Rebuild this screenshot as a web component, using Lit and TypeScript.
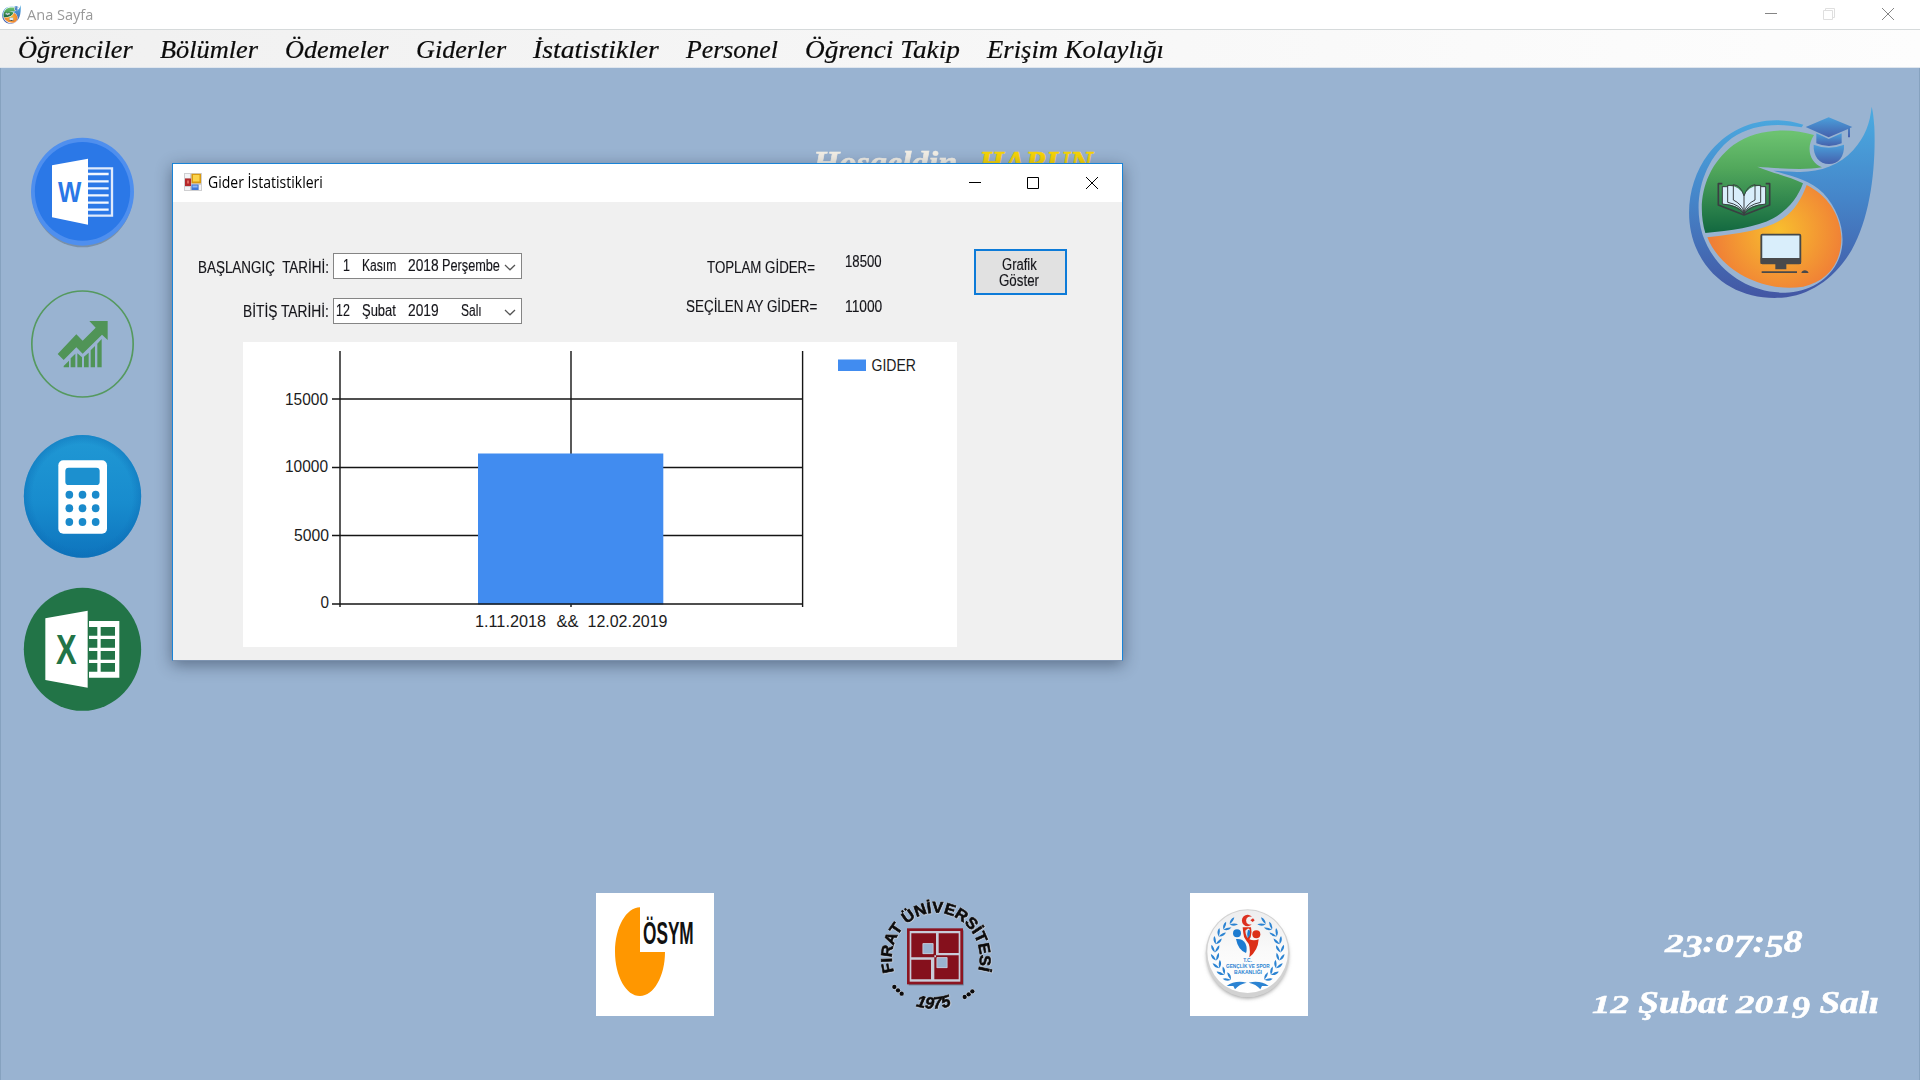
import { LitElement, html, svg, css } from "lit";
import { customElement, property } from "lit/decorators.js";

/** One line of text, stretched or squeezed horizontally to a given width. */
@customElement("fit-text")
class FitText extends LitElement {
  static styles = css`
    :host { display: block; white-space: pre; flex: none; }
    .line { display: inline-block; transform-origin: 0 50%; }
  `;
  @property({ type: Number }) w = 0;
  updated() {
    const line = this.renderRoot.querySelector(".line") as HTMLElement;
    const natural = line.offsetWidth;
    this.style.width = `${this.w}px`;
    if (natural && this.w) line.style.transform = `scaleX(${this.w / natural})`;
  }
  render() {
    return html`<span class="line"><slot></slot></span>`;
  }
}

/** Emblem: comet shape with cap, book and monitor. */
const emblem = (cls: string, id: string) => html`
  <svg class=${cls} viewBox="81 318 570 582" preserveAspectRatio="none">
    <defs>
      <linearGradient id="${id}b" gradientUnits="userSpaceOnUse" x1="0" y1="350" x2="0" y2="895">
        <stop offset="0" stop-color="#4aa8df" /><stop offset=".45" stop-color="#4585c9" /><stop offset="1" stop-color="#4356a3" />
      </linearGradient>
      <linearGradient id="${id}g" gradientUnits="userSpaceOnUse" x1="0" y1="400" x2="0" y2="695">
        <stop offset="0" stop-color="#6cc270" /><stop offset=".35" stop-color="#52a85c" /><stop offset="1" stop-color="#136940" />
      </linearGradient>
      <radialGradient id="${id}o" gradientUnits="userSpaceOnUse" cx="355" cy="695" r="200">
        <stop offset="0" stop-color="#f8bf2e" /><stop offset="1" stop-color="#f07f36" />
      </radialGradient>
      <linearGradient id="${id}c" x1="0" y1="0" x2="0" y2="1">
        <stop offset="0" stop-color="#4a9fdb" /><stop offset="1" stop-color="#4560ac" />
      </linearGradient>
    </defs>
    <path fill="url(#${id}b)" d="M430 374C330 340 215 370 145 462C85 540 68 660 112 752C160 855 260 900 365 893C450 887 525 835 575 750C632 650 648 500 643 380C641 350 638 330 635 320C630 370 615 410 580 450C535 500 470 520 400 515L340 512C400 530 450 540 490 580C545 640 562 720 535 780C510 840 440 880 370 878C260 876 165 810 128 705C95 600 130 480 215 415C275 372 355 368 425 382Z" />
    <path fill="url(#${id}g)" d="M462 405C390 382 290 385 220 435C130 505 110 610 136 699C210 693 290 682 340 655C385 630 415 590 429 550C390 530 340 520 292 500C350 504 430 512 486 502C452 490 435 445 462 405Z" />
    <path fill="url(#${id}o)" d="M142 712C240 700 320 690 370 655C405 630 425 595 440 555C500 585 540 640 544 710C546 790 500 845 430 860C310 880 180 810 142 712Z" />
    <path fill="url(#${id}c)" d="M437 381L506 352L577 381L570 384V412H564V387L506 412Z" />
    <path fill="url(#${id}c)" d="M469 400L506 417L545 400V430Q507 446 469 430Z" />
    <path fill="url(#${id}c)" d="M461 434Q506 452 552 434C554 470 535 492 507 492C478 492 459 468 461 434Z" />
    <g stroke="#3a3f42" stroke-width="3" fill="#d9eefb" stroke-linejoin="round">
      <path fill="none" stroke-width="5" d="M187 551H175V615L252 645L329 615V551H317" />
      <path d="M252 640C240 620 215 612 187 612V562Q235 548 252 588Q270 548 317 562V612C290 612 264 620 252 640Z" stroke="none" />
      <path fill="none" d="M252 636V588Q243 556 220 554V600Q245 612 252 636Q260 612 285 600V554Q262 556 252 588M220 556H203V607Q240 614 252 640Q264 614 302 607V556H285M203 560H187V612Q235 616 252 642Q270 616 317 612V560H302" />
    </g>
    <rect x="304" y="704" width="117" height="86" rx="3" fill="#d9eefb" stroke="#44484a" stroke-width="5.500" />
    <path fill="#48494b" d="M302 774H423V792H379V808H346V792H302ZM305 814H411V819H305ZM424 819Q426 811 435 811Q444 812 446 819Z" />
  </svg>`;

const wordIcon = html`
  <svg class="ic-word" viewBox="90 48 315 336">
    <ellipse cx="247.500" cy="219" rx="152" ry="163" fill="#5f7287" opacity=".55" />
    <ellipse cx="247.500" cy="215" rx="154.500" ry="162" fill="#4f8fee" />
    <ellipse cx="247.500" cy="214" rx="143" ry="148" fill="#2b78e7" />
    <path fill="#fff" d="M156 136L264 116V314L156 292Z" />
    <path fill="none" stroke="#dfeafc" stroke-width="7" d="M264 145H336V287H264" />
    <path stroke="#f2f7ff" stroke-width="7" d="M264 162H326M264 184H326M264 205H326M264 226H326M264 248H326M264 269H326" />
    <text x="174" y="247" textLength="70" lengthAdjust="spacingAndGlyphs" class="ms" fill="#2b78e7" font-size="91">W</text>
  </svg>`;

const growthIcon = html`
  <svg class="ic-growth" viewBox="90 507 315 330">
    <ellipse cx="247.500" cy="672" rx="152" ry="159" fill="none" stroke="#55995f" stroke-width="5" />
    <path fill="#509457" d="M268 603H323V660L306 644L248 701L229 682L191 720L173 702L229 643L248 662L287 623Z" />
    <path fill="#509457" d="M191 742V738L207 722V742ZM212 742V715L226 701V742ZM232 742V700L246 712V742ZM252 742V710L266 698V742ZM272 742V691L285 678V742ZM292 742V671L305 657V742Z" />
  </svg>`;

const calcIcon = html`
  <svg class="ic-big" viewBox="69 42 357 375">
    <defs>
      <linearGradient id="cg" x1="0" y1="0" x2="0" y2="1">
        <stop offset="0" stop-color="#2098d4" /><stop offset=".55" stop-color="#188cce" /><stop offset="1" stop-color="#0e74bd" />
      </linearGradient>
      <radialGradient id="cr"><stop offset=".85" stop-color="#0d6db5" stop-opacity="0" /><stop offset="1" stop-color="#0d6db5" stop-opacity=".45" /></radialGradient>
    </defs>
    <ellipse cx="247.500" cy="229" rx="176" ry="184" fill="url(#cg)" />
    <ellipse cx="247.500" cy="229" rx="176" ry="184" fill="url(#cr)" />
    <rect x="175" y="121" width="146" height="220" rx="15" fill="#fff" />
    <rect x="196" y="143" width="103" height="52" rx="10" fill="#1c90cf" />
    ${[224, 265, 306].map((y) => [208, 247.5, 287].map((x) => svg`<ellipse cx=${x} cy=${y} rx="11.500" ry="12" fill="#1a8acb" />`))}
  </svg>`;

const excelIcon = html`
  <svg class="ic-big" viewBox="69 501 357 375">
    <ellipse cx="247.500" cy="688" rx="176" ry="184.500" fill="#227447" />
    <path fill="#fff" d="M136 595L263 572V803L136 780ZM267 603H358V773H267Z" />
    ${[621, 657, 693, 729].map((y) => svg`<path fill="#227447" d="M267 ${y}H292V${y + 26}H267ZM302 ${y}H345V${y + 26}H302Z" />`)}
    <text x="168" y="732" textLength="62" lengthAdjust="spacingAndGlyphs" class="ms" fill="#227447" font-size="125">X</text>
  </svg>`;

const osymLogo = html`
  <svg class="osym" viewBox="33 39 354 369">
    <rect x="33" y="39" width="354" height="369" fill="#fff" />
    <path fill="#ff9700" d="M165 82C124 82 90 142 90 215C90 289 124 348 165 348C206 348 240 289 240 216H165Z" />
    <text transform="translate(174 193) scale(.55 1)" class="ms" fill="#111" font-size="94">ÖSYM</text>
  </svg>`;

const firatLogo = html`
  <svg class="firat" viewBox="876 48 351 354">
    <defs>
      <path id="arc" d="M927 276A132 136 0 1 1 1178 277" />
      <path id="arcLow" d="M985 376Q1048 398 1110 372" />
    </defs>
    <g class="ms halo" fill="#0b0b0d" stroke="#0b0b0d" stroke-width="2">
      <text font-size="47"><textPath href="#arc" textLength="500" lengthAdjust="spacingAndGlyphs">FIRAT ÜNİVERSİTESİ</textPath></text>
      <text font-size="49" font-style="italic"><textPath href="#arcLow" startOffset="8">1975</textPath></text>
    </g>
    <g fill="#0b0b0d" stroke="#d9dce2" stroke-width="3" paint-order="stroke">
      <circle cx="928" cy="321" r="6.500" /><circle cx="939" cy="331" r="6.500" /><circle cx="950" cy="341" r="6.500" />
      <circle cx="1139" cy="351" r="6.500" /><circle cx="1151" cy="343" r="6.500" /><circle cx="1162" cy="334" r="6.500" />
    </g>
    <rect x="971" y="151" width="165" height="165" fill="#55606f" opacity=".7" />
    <rect x="966" y="145" width="168" height="168" fill="#8c1420" />
    <rect x="974" y="153" width="152" height="152" fill="#c9ccd9" />
    <path fill="#85101c" fill-rule="evenodd" d="M979 160H1053V232H979ZM1013 190V222H1045V190ZM1048 226H1121V298H1048ZM1055 232V264H1087V232Z" />
    <path fill="#85101c" d="M1061 160H1121V219H1061ZM979 239H1038V298H979Z" />
    <path fill="#9ab3d0" stroke="#c9ccd9" stroke-width="2" d="M1014 191H1044V221H1014ZM1056 233H1086V263H1056Z" />
  </svg>`;

const leaves = [-1, 1].flatMap((side) =>
  Array.from({ length: 9 }, (_, i) => {
    const a = ((62 - i * 14.5) * Math.PI) / 180;
    const x = 203 + side * Math.cos(a) * 98;
    const y = 215 - Math.sin(a) * 98;
    const along = (Math.atan2(-Math.cos(a), -side * Math.sin(a)) * 180) / Math.PI;
    return svg`<g transform="translate(${x} ${y}) rotate(${along})">
      <path d="M-9 0Q-2 -14 13 -12Q7 -3 -9 0ZM-9 0Q-2 14 13 12Q7 3 -9 0Z" /></g>`;
  })
);

const gsbLogo = html`
  <svg class="gsb" viewBox="30 39 354 369">
    <defs>
      <filter id="soft" x="-20%" y="-20%" width="140%" height="140%"><feGaussianBlur stdDeviation="6" /></filter>
      <linearGradient id="ball" x1="0" y1="0" x2="0" y2="1"><stop offset="0" stop-color="#ededee" /><stop offset=".5" stop-color="#fafafa" /><stop offset="1" stop-color="#fff" /></linearGradient>
    </defs>
    <rect x="30" y="39" width="354" height="369" fill="#fff" />
    <ellipse cx="203" cy="228" rx="121" ry="126" fill="#8a8a8a" filter="url(#soft)" />
    <ellipse cx="203" cy="220" rx="126" ry="132" fill="#d2d2d2" />
    <ellipse cx="203" cy="215" rx="121" ry="124" fill="url(#ball)" />
    <g fill="#2b83d2">${leaves}
      <path d="M140 318Q165 300 200 308Q178 312 165 328L160 318ZM266 318Q241 300 206 308Q228 312 241 328L246 318Z" />
    </g>
    <path fill="#dc3020" fill-rule="evenodd" d="M216 111A17 17 0 1 0 216 132A12 12 0 1 1 216 111ZM219 115L224 121L218 126L211 121Z" />
    <circle cx="171" cy="160" r="12" fill="#1d7bd0" /><circle cx="229" cy="163" r="12" fill="#dc3018" />
    <path fill="#1d7bd0" d="M168 177Q188 175 196 190Q203 205 198 219Q174 210 168 177Z" />
    <path fill="#dc3018" d="M188 142H213Q217 158 212 172L208 178Q222 184 236 178Q234 212 208 232Q214 196 199 182Q190 172 190 160Z" />
    <path fill="#d7ecfa" d="M196 152Q206 142 208 148Q212 165 202 174Q196 162 196 152Z" /><path fill="#1d7bd0" d="M204 150Q213 148 209 166L203 175Q200 160 204 150Z" />
    <g class="ms" fill="#2b83d2">
      <text x="190" y="247" font-size="17" textLength="26" lengthAdjust="spacingAndGlyphs">T.C.</text>
      <text x="138" y="265" font-size="18" textLength="131" lengthAdjust="spacingAndGlyphs">GENÇLİK VE SPOR</text>
      <text x="162" y="283" font-size="18" textLength="84" lengthAdjust="spacingAndGlyphs">BAKANLIĞI</text>
    </g>
  </svg>`;

const formIcon = html`
  <svg class="form-icon" viewBox="0 0 18 18">
    <rect width="18" height="18" fill="#cfcfd1" />
    <path fill="#f3f3f5" d="M1 1H6V5H1ZM1 14H6V17H1ZM15 12H17V17H15Z" />
    <rect x="1" y="5.500" width="6" height="7.500" fill="#b5282a" /><rect x="3" y="7.500" width="2" height="3" fill="#e06a60" />
    <rect x="7.500" y=".8" width="9.500" height="9.500" fill="#d99a10" /><rect x="9" y="2" width="6.500" height="6.500" fill="#fbd34b" />
    <rect x="7.500" y="11.500" width="7" height="5.500" fill="#3f78d8" /><rect x="8.500" y="12.500" width="5" height="2" fill="#8db6f5" />
  </svg>`;

/** Window buttons: minimise, maximise or restore, close. */
const controls = (restore: boolean) => html`
  <svg class="controls" viewBox="0 0 130 14" fill="none" stroke="currentColor">
    <path d="M1 6.500H13" />
    ${restore
      ? svg`<path class="faint" d="M59.500 3.500H68.500V12.500H59.500ZM61.500 3.500V1.500H70.500V10.500H68.500" />`
      : svg`<path d="M59.500 1.500H70.500V12.500H59.500Z" />`}
    <path d="M118 1L130 13M130 1L118 13" />
  </svg>`;

const menu: [string, number][] = [
  ["Öğrenciler", 115], ["Bölümler", 98], ["Ödemeler", 104], ["Giderler", 90],
  ["İstatistikler", 126], ["Personel", 92], ["Öğrenci Takip", 155], ["Erişim Kolaylığı", 177],
];

/** Old-style figures: 0-2 at x-height, 3, 4, 5, 7 and 9 below the baseline. */
const oldStyle = (text: string) =>
  [...text].map((c) =>
    /[012]/.test(c) ? html`<span class="low">${c}</span>` : /[34579]/.test(c) ? html`<span class="drop">${c}</span>` : c
  );

interface Cell { text: string; x: number; w: number; }
const pickers: Cell[][] = [
  [{ text: "1", x: 9, w: 7 }, { text: "Kasım", x: 12, w: 34 }, { text: "2018", x: 12, w: 31 }, { text: "Perşembe", x: 3, w: 58 }],
  [{ text: "12", x: 2, w: 14 }, { text: "Şubat", x: 12, w: 34 }, { text: "2019", x: 12, w: 31 }, { text: "Salı", x: 22, w: 21 }],
];

const yAxis = [
  { label: "15000", y: 57, x: 42, w: 43, base: 62.5 },
  { label: "10000", y: 125.5, x: 42, w: 43, base: 130 },
  { label: "5000", y: 193.5, x: 51, w: 35, base: 198.5 },
];

const chart = html`
  <svg class="chart" viewBox="0 0 714 305">
    <path stroke="#151515" stroke-width="1.400" d="M97 9V265M328 9V265M559.600 9V265" />
    ${yAxis.map((t) => svg`<path stroke="#151515" stroke-width="1.400" d="M89 ${t.y}H560" />
      <text x=${t.x} y=${t.base} textLength=${t.w} lengthAdjust="spacingAndGlyphs">${t.label}</text>`)}
    <rect x="235" y="111.500" width="185.300" height="151" fill="#418cf0" />
    <path stroke="#151515" stroke-width="1.400" d="M89 262H560" />
    <text x="77.500" y="266" textLength="8.500" lengthAdjust="spacingAndGlyphs">0</text>
    <text x="232" y="285" textLength="71" lengthAdjust="spacingAndGlyphs">1.11.2018</text>
    <text x="313.500" y="285" textLength="22" lengthAdjust="spacingAndGlyphs">&amp;&amp;</text>
    <text x="344.500" y="285" textLength="80" lengthAdjust="spacingAndGlyphs">12.02.2019</text>
    <rect x="595" y="17.500" width="28" height="11.500" fill="#418cf0" />
    <text class="key" x="628.500" y="28.700" textLength="44.500" lengthAdjust="spacingAndGlyphs">GIDER</text>
  </svg>`;

@customElement("app-root")
class AppRoot extends LitElement {
  static styles = css`
    :host { display: flex; flex-direction: column; position: relative; width: 1920px; height: 1080px; overflow: hidden;
      background: #99b3d1; font-family: "Liberation Sans", Arial, sans-serif; color: #111; }
    svg { display: block; flex: none; }
    .ms { font-family: "Liberation Sans", Arial, sans-serif; font-weight: bold; }
    .halo { filter: drop-shadow(0 0 1px #fff) drop-shadow(1px 1px 1px #e4e4ea); }

    .titlebar { display: flex; height: 29px; background: #fff; color: #999; box-sizing: border-box; padding: 5px 26px 0 2px; font: 15px/19px "Open Sans", sans-serif; }
    .mini { width: 19px; height: 19px; margin-right: 6px; }
    .controls { width: 130px; height: 14px; }
    .titlebar .controls { margin: 2px 0 0 auto; color: #858585; }
    .faint { stroke: #dfdfdf; }

    .menubar { display: flex; gap: 27px; height: 39px; box-sizing: border-box; padding: 4px 0 0 18px;
      border-top: 1px solid #d6dadb; border-bottom: 1px solid #dfe6ee; background: linear-gradient(90deg, #f0f0f0, #fdfdfd);
      font: italic 25px/31px "Liberation Serif", "Times New Roman", serif; color: #0b0b0b; -webkit-text-stroke: .2px #0b0b0b; }

    .desktop { flex: 1; display: flex; flex-direction: column; border: solid #86a2bf; border-width: 0 1px; box-sizing: border-box; }
    .top { display: flex; align-items: flex-start; height: 825px; }
    .icons { display: flex; flex-direction: column; align-items: center; width: 119px; padding: 68px 0 0 22px; }
    .ic-word { width: 105px; height: 112px; margin-bottom: 41px; }
    .ic-growth { width: 105px; height: 110px; margin-bottom: 35px; }
    .ic-big { width: 119px; height: 125px; margin-bottom: 28px; }
    .welcome { display: flex; gap: 22px; padding: 74px 0 0 671px; color: #f3efe6; -webkit-text-stroke: .6px; }
    .welcome, .clock { font: italic bold 32px/40px "Liberation Serif", "Times New Roman", serif; }
    .name { color: #f7d406; }
    .emblem { width: 190px; height: 194px; margin: 38px 42px 0 auto; }

    .bottom { display: flex; align-items: flex-start; padding-left: 595px; }
    .osym, .gsb { width: 118px; height: 123px; }
    .firat { width: 117px; height: 118px; margin: 3px 196px 0 163px; overflow: visible; }
    .clock { display: flex; flex-direction: column; gap: 21px; width: 287px; margin: 28px 40px 0 auto; color: #fff; -webkit-text-stroke: .6px #fff; }
    .time { margin-left: 73px; }
    .low, .drop { display: inline-block; }
    .low { transform: scaleY(.76); transform-origin: 50% 77%; }
    .drop { transform: translateY(.16em); }

    .window { position: absolute; left: 172px; top: 163px; width: 949px; height: 496px; border: 1px solid #1883d7; border-bottom-color: #7d93b0;
      background: #f0f0f0; box-shadow: 0 4px 15px 0 rgba(20, 30, 50, .45); }
    .caption { display: flex; height: 38px; background: #fff; color: #000; font: 15.500px/20px "Open Sans", sans-serif; }
    .form-icon { width: 18px; height: 18px; margin: 9px 6px 0 11px; }
    .caption fit-text { margin-top: 8px; }
    .caption .controls { margin: 12px 24px 0 auto; color: #000; }
    .fields { display: flex; align-items: flex-start; height: 140px; font-size: 16px; line-height: 20px; color: #15151a; -webkit-text-stroke: .15px #15151a; }
    .col { display: flex; flex-direction: column; }
    .labels { width: 156px; padding-top: 56px; gap: 24px; align-items: flex-end; }
    .inputs { margin-left: 4px; padding-top: 51px; gap: 19px; }
    .picker { display: flex; width: 189px; height: 26px; box-sizing: border-box; border: 1px solid #858585; background: #fff; padding-top: 2px; }
    .chev { width: 12px; height: 7px; margin: 8px 5px 0 auto; }
    .sums { width: 295px; padding-top: 56px; gap: 19px; align-items: flex-end; }
    .first { margin-right: 2px; }
    .values { margin-left: 28px; padding-top: 50px; gap: 25px; width: 129px; }
    .button { display: flex; flex-direction: column; align-items: center; justify-content: flex-start; width: 93px; height: 46px; margin-top: 47px; padding: 6px 3px 0 0;
      box-sizing: border-box; border: 2px solid #0d7bd8; background: #e1e1e1; font: inherit; line-height: 16.400px; color: #15151a; }
    .chart { width: 714px; height: 305px; margin-left: 70px; background: #fff; font-size: 17px; fill: #1c1c1c; }
    .key { font-size: 16px; }
  `;

  cells(row: Cell[]) {
    return row.map((c) => html`<fit-text .w=${c.w} style="margin-left:${c.x}px">${c.text}</fit-text>`);
  }

  render() {
    return html`
      <header class="titlebar">
        ${emblem("mini", "m")}
        <fit-text .w=${66}>Ana Sayfa</fit-text>
        ${controls(true)}
      </header>
      <nav class="menubar">${menu.map(([t, w]) => html`<fit-text .w=${w}>${t}</fit-text>`)}</nav>
      <main class="desktop">
        <div class="top">
          <div class="icons">${wordIcon}${growthIcon}${calcIcon}${excelIcon}</div>
          <div class="welcome"><fit-text .w=${144}>Hoşgeldin</fit-text><fit-text class="name" .w=${114}>HARUN</fit-text></div>
          ${emblem("emblem", "e")}
        </div>
        <div class="bottom">
          ${osymLogo}${firatLogo}${gsbLogo}
          <div class="clock">
            <fit-text class="time" .w=${137}>${oldStyle("23:07:58")}</fit-text>
            <fit-text .w=${287}>${oldStyle("12 Şubat 2019 Salı")}</fit-text>
          </div>
        </div>
      </main>
      <section class="window">
        <div class="caption">${formIcon}<fit-text .w=${115}>Gider İstatistikleri</fit-text>${controls(false)}</div>
        <div class="fields">
          <div class="col labels"><fit-text .w=${131}>BAŞLANGIÇ  TARİHİ:</fit-text><fit-text .w=${86}>BİTİŞ TARİHİ:</fit-text></div>
          <div class="col inputs">
            ${pickers.map((p) => html`<div class="picker">${this.cells(p)}
              <svg class="chev" viewBox="0 0 12 7"><path d="M1 1L6 5.800L11 1" fill="none" stroke="#555" stroke-width="1.300" /></svg></div>`)}
          </div>
          <div class="col sums"><fit-text class="first" .w=${108}>TOPLAM GİDER=</fit-text><fit-text .w=${131}>SEÇİLEN AY GİDER=</fit-text></div>
          <div class="col values"><fit-text .w=${37}>18500</fit-text><fit-text .w=${37}>11000</fit-text></div>
          <button class="button"><fit-text .w=${35}>Grafik</fit-text><fit-text .w=${40}>Göster</fit-text></button>
        </div>
        ${chart}
      </section>
    `;
  }
}
